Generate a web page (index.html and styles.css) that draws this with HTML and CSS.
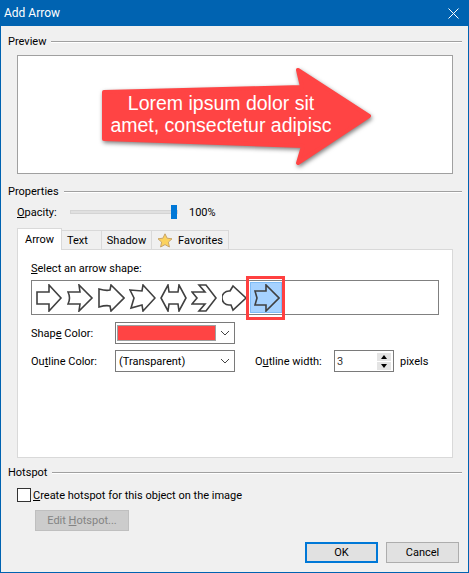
FILE: index.html
```html
<!DOCTYPE html>
<html lang="en">
<head>
    <meta charset="UTF-8">
    <meta name="viewport" content="width=device-width, initial-scale=1.0">
    <title>Add Arrow</title>
    <link rel="stylesheet" href="styles.css">
</head>
<body>
    <div class="dialog">
        <div class="title-bar">
            <span class="title-text">Add Arrow</span>
            <svg class="close-icon" width="11" height="11" viewBox="0 0 11 11">
                <path d="M0.5 0.5 L10.5 10.5 M10.5 0.5 L0.5 10.5" stroke="#fff" stroke-width="1" fill="none"/>
            </svg>
        </div>

        <div class="dialog-body">
            <div class="group-title"><span>Preview</span><div class="group-line"></div></div>
            <div class="preview">
                <svg class="preview-art" width="434" height="117" viewBox="0 0 434 117">
                    <path class="preview-arrow" d="M86 36 L284 31 L280 14 L351 60 L280 107 L285 90 L86 83 Z"/>
                    <text class="preview-text" x="203" y="54" text-anchor="middle">Lorem ipsum dolor sit</text>
                    <text class="preview-text" x="203" y="76" text-anchor="middle">amet, consectetur adipisc</text>
                </svg>
            </div>

            <div class="group-title properties-title"><span>Properties</span><div class="group-line"></div></div>
            <div class="opacity-row">
                <label class="opacity-label"><u>O</u>pacity:</label>
                <div class="slider"><div class="slider-thumb"></div></div>
                <span>100%</span>
            </div>

            <div class="tabs">
                <div class="tab tab-active">Arrow</div>
                <div class="tab tab-text">Text</div>
                <div class="tab tab-shadow">Shadow</div>
                <div class="tab tab-fav">
                    <svg width="16" height="15" viewBox="0 0 16 15">
                        <path d="M8 0.8 L10.1 5.2 L15 5.8 L11.4 9.1 L12.4 14 L8 11.6 L3.6 14 L4.6 9.1 L1 5.8 L5.9 5.2 Z" fill="#fbd25e" stroke="#c8a468" stroke-width="1" stroke-linejoin="round"/>
                    </svg>
                    <span>Favorites</span>
                </div>
            </div>
            <div class="tab-panel">
                <div class="shape-title"><u>S</u>elect an arrow shape:</div>
                <div class="shape-list">
                    <div class="shape"><svg width="27" height="28" viewBox="0 0 27 28"><path d="M1 8 H13 V1 L25 14 L13 27 V20 H1 Z"/></svg></div>
                    <div class="shape"><svg width="27" height="28" viewBox="0 0 27 28"><path d="M1 8 H13 L12 1 L25 14 L12 27 L13 20 H1 Q4 14 1 8 Z"/></svg></div>
                    <div class="shape"><svg width="27" height="28" viewBox="0 0 27 28"><path d="M1 5 Q8 7 12 6 L13 1 L26 14 L13 27 L12 22 Q8 21 1 23 Z"/></svg></div>
                    <div class="shape"><svg width="27" height="28" viewBox="0 0 27 28"><path d="M1 6 L13 7 L14 1 L26 14 L14 27 L13 21 L2 24 L5 14 Z"/></svg></div>
                    <div class="shape"><svg width="27" height="28" viewBox="0 0 27 28"><path d="M8 1 L9 8 H18 L19 1 L26 14 L19 27 L18 20 H9 L8 27 L1 14 Z"/></svg></div>
                    <div class="shape"><svg width="27" height="28" viewBox="0 0 27 28"><path d="M1 8 H14 L8 1 H15 L25 14 L15 27 H8 L14 20 H1 L6 14 Z"/></svg></div>
                    <div class="shape"><svg width="27" height="28" viewBox="0 0 27 28"><path d="M8 7 L11 2 L24 14 L11 26 L9 21 H7 A7 7 0 0 1 7 7 Z"/></svg></div>
                    <div class="shape shape-selected"><svg width="27" height="28" viewBox="0 0 27 28"><path d="M2 7 H13 V1 L26 14 L13 27 V21 H2 L4 14 Z"/></svg></div>
                </div>

                <div class="form-row color-row">
                    <label class="form-label">Shap<u>e</u> Color:</label>
                    <div class="combo"><div class="color-swatch"></div><svg class="combo-arrow" width="10" height="6" viewBox="0 0 10 6"><path d="M1 1 L5 5 L9 1" fill="none" stroke="#444"/></svg></div>
                </div>
                <div class="form-row outline-row">
                    <label class="form-label">Ou<u>t</u>line Color:</label>
                    <div class="combo"><span class="combo-text">(Transparent)</span><svg class="combo-arrow" width="10" height="6" viewBox="0 0 10 6"><path d="M1 1 L5 5 L9 1" fill="none" stroke="#444"/></svg></div>
                    <label class="width-label">O<u>u</u>tline width:</label>
                    <div class="spinner">
                        <span>3</span>
                        <div class="spin-buttons">
                            <div class="spin-btn"><i class="tri-up"></i></div>
                            <div class="spin-btn"><i class="tri-down"></i></div>
                        </div>
                    </div>
                    <span class="pixels">pixels</span>
                </div>
            </div>

            <div class="group-title hotspot-title"><span>Hotspot</span><div class="group-line"></div></div>
            <div class="check-row">
                <div class="checkbox"></div>
                <label><u>C</u>reate hotspot for this object on the image</label>
            </div>
            <div class="btn btn-disabled"><span>Edit <u>H</u>otspot...</span></div>

            <div class="actions">
                <div class="btn btn-primary">OK</div>
                <div class="btn btn-cancel">Cancel</div>
            </div>
        </div>
    </div>
</body>
</html>
```

FILE: styles.css
```css
* {
    margin: 0;
    padding: 0;
    box-sizing: border-box;
}

body {
    font-family: Roboto, "Noto Sans", sans-serif;
    font-size: 11px;
    color: #000;
    background: #f0f0f0;
    width: 469px;
    height: 573px;
    overflow: hidden;
}

.dialog {
    width: 469px;
    height: 573px;
    border: 1px solid #0063b1;
    border-top: none;
    background: #f0f0f0;
    display: flex;
    flex-direction: column;
}

.title-bar {
    height: 26px;
    flex: none;
    background: #0063b1;
    color: #fff;
    display: flex;
    align-items: center;
    justify-content: space-between;
    padding: 0 9px 0 3px;
    font-size: 12px;
}

.dialog-body {
    flex: 1;
    padding: 0 6px 0 7px;
    display: flex;
    flex-direction: column;
}

.group-title {
    display: flex;
    align-items: center;
    gap: 5px;
    height: 16px;
    margin-top: 7px;
}

.group-line {
    flex: 1;
    height: 2px;
    margin-top: 2px;
    background: #a0a0a0;
    border-bottom: 1px solid #fff;
}

.preview {
    width: 436px;
    height: 119px;
    margin: 6px 0 0 9px;
    background: #fff;
    border: 1px solid #a0a0a0;
}

.preview-art {
    display: block;
}

.preview-arrow {
    fill: #ff4444;
    stroke: #ff4444;
    stroke-width: 4;
    stroke-linejoin: round;
    filter: drop-shadow(1px 2px 2px rgba(0, 0, 0, 0.5));
}

.preview-text {
    font-family: "Liberation Sans", Arial, sans-serif;
    font-size: 19.5px;
    fill: #fff;
}

.properties-title {
    margin-top: 9px;
}

.opacity-row {
    display: flex;
    align-items: center;
    height: 20px;
    margin: 3px 0 0 9px;
}

.opacity-label {
    width: 53px;
}

.slider {
    position: relative;
    width: 108px;
    height: 4px;
    margin-right: 11px;
    background: #e0e0e0;
    border: 1px solid #d4d4d4;
}

.slider-thumb {
    position: absolute;
    right: 0;
    top: -6px;
    width: 6px;
    height: 14px;
    background: #0078d7;
}

.tabs {
    display: flex;
    align-items: flex-end;
    height: 22px;
    margin: 6px 0 -1px 9px;
    position: relative;
    z-index: 1;
}

.tab {
    height: 20px;
    display: flex;
    align-items: center;
    justify-content: center;
    background: #f0f0f0;
    border: 1px solid #d9d9d9;
    border-left: none;
}

.tab-active {
    width: 45px;
    height: 22px;
    background: #fff;
    border-left: 1px solid #d9d9d9;
    border-bottom: none;
}

.tab-text {
    width: 40px;
    justify-content: flex-start;
    padding-left: 5px;
}

.tab-shadow {
    width: 50px;
}

.tab-fav {
    width: 77px;
    gap: 5px;
}

.tab-panel {
    width: 436px;
    height: 209px;
    margin-left: 9px;
    background: #fff;
    border: 1px solid #d9d9d9;
    padding: 10px 13px 0;
}

.shape-title {
    height: 17px;
    line-height: 17px;
}

.shape-list {
    display: flex;
    align-items: center;
    height: 35px;
    width: 408px;
    margin-top: 3px;
    padding-left: 4px;
    gap: 4px;
    border: 1px solid #808080;
}

.shape {
    width: 27px;
    height: 31px;
    display: flex;
    align-items: center;
    justify-content: center;
}

.shape svg path {
    fill: #fff;
    stroke: #404040;
    stroke-width: 1.6;
    stroke-linejoin: miter;
}

.shape-selected {
    position: relative;
    width: 32px;
    margin-left: -3px;
    background: #a6d2ff;
    border: 1px solid #7fbcf5;
}

.shape-selected svg path {
    fill: #a6d2ff;
}

.shape-selected::after {
    content: "";
    position: absolute;
    top: -7px;
    bottom: -8px;
    left: -5px;
    right: -4px;
    border: 3px solid #ff4040;
}

.form-row {
    display: flex;
    align-items: center;
}

.color-row {
    margin-top: 7px;
}

.outline-row {
    margin-top: 6px;
}

.form-label {
    width: 84px;
}

.combo {
    width: 120px;
    height: 22px;
    border: 1px solid #7a7a7a;
    background: #fff;
    display: flex;
    align-items: center;
    justify-content: space-between;
    padding: 2px 4px 2px 2px;
}

.color-swatch {
    width: 97px;
    height: 14px;
    background: #ff4444;
    outline: 1px solid #a0a0a0;
}

.combo-text {
    padding-left: 1px;
}

.combo-arrow {
    flex: none;
}

.width-label {
    width: 79px;
    margin-left: 20px;
}

.spinner {
    width: 60px;
    height: 22px;
    border: 1px solid #7a7a7a;
    background: #fff;
    display: flex;
    align-items: center;
    justify-content: space-between;
    padding: 1px 2px 1px 2px;
    color: #333;
}

.spin-buttons {
    width: 14px;
    display: flex;
    flex-direction: column;
    gap: 1px;
}

.spin-btn {
    height: 8px;
    background: #e4e4e4;
    display: flex;
    align-items: center;
    justify-content: center;
}

.tri-up {
    border: 3px solid transparent;
    border-top: none;
    border-bottom: 4px solid #000;
}

.tri-down {
    border: 3px solid transparent;
    border-bottom: none;
    border-top: 4px solid #000;
}

.pixels {
    margin-left: 6px;
}

.hotspot-title {
    margin-top: 6px;
}

.check-row {
    display: flex;
    align-items: center;
    gap: 2px;
    height: 14px;
    margin: 8px 0 0 9px;
}

.checkbox {
    width: 14px;
    height: 14px;
    background: #fff;
    border: 1px solid #333;
}

.btn {
    height: 21px;
    display: flex;
    align-items: center;
    justify-content: center;
    background: #e1e1e1;
    border: 1px solid #adadad;
}

.btn-disabled {
    width: 94px;
    margin: 8px 0 0 27px;
    background: #cccccc;
    border-color: #bfbfbf;
    color: #838383;
}

.actions {
    display: flex;
    justify-content: flex-end;
    gap: 8px;
    margin-top: 11px;
    padding-right: 3px;
}

.actions .btn {
    width: 73px;
}

.btn-primary {
    border: 2px solid #0078d7;
}
```
